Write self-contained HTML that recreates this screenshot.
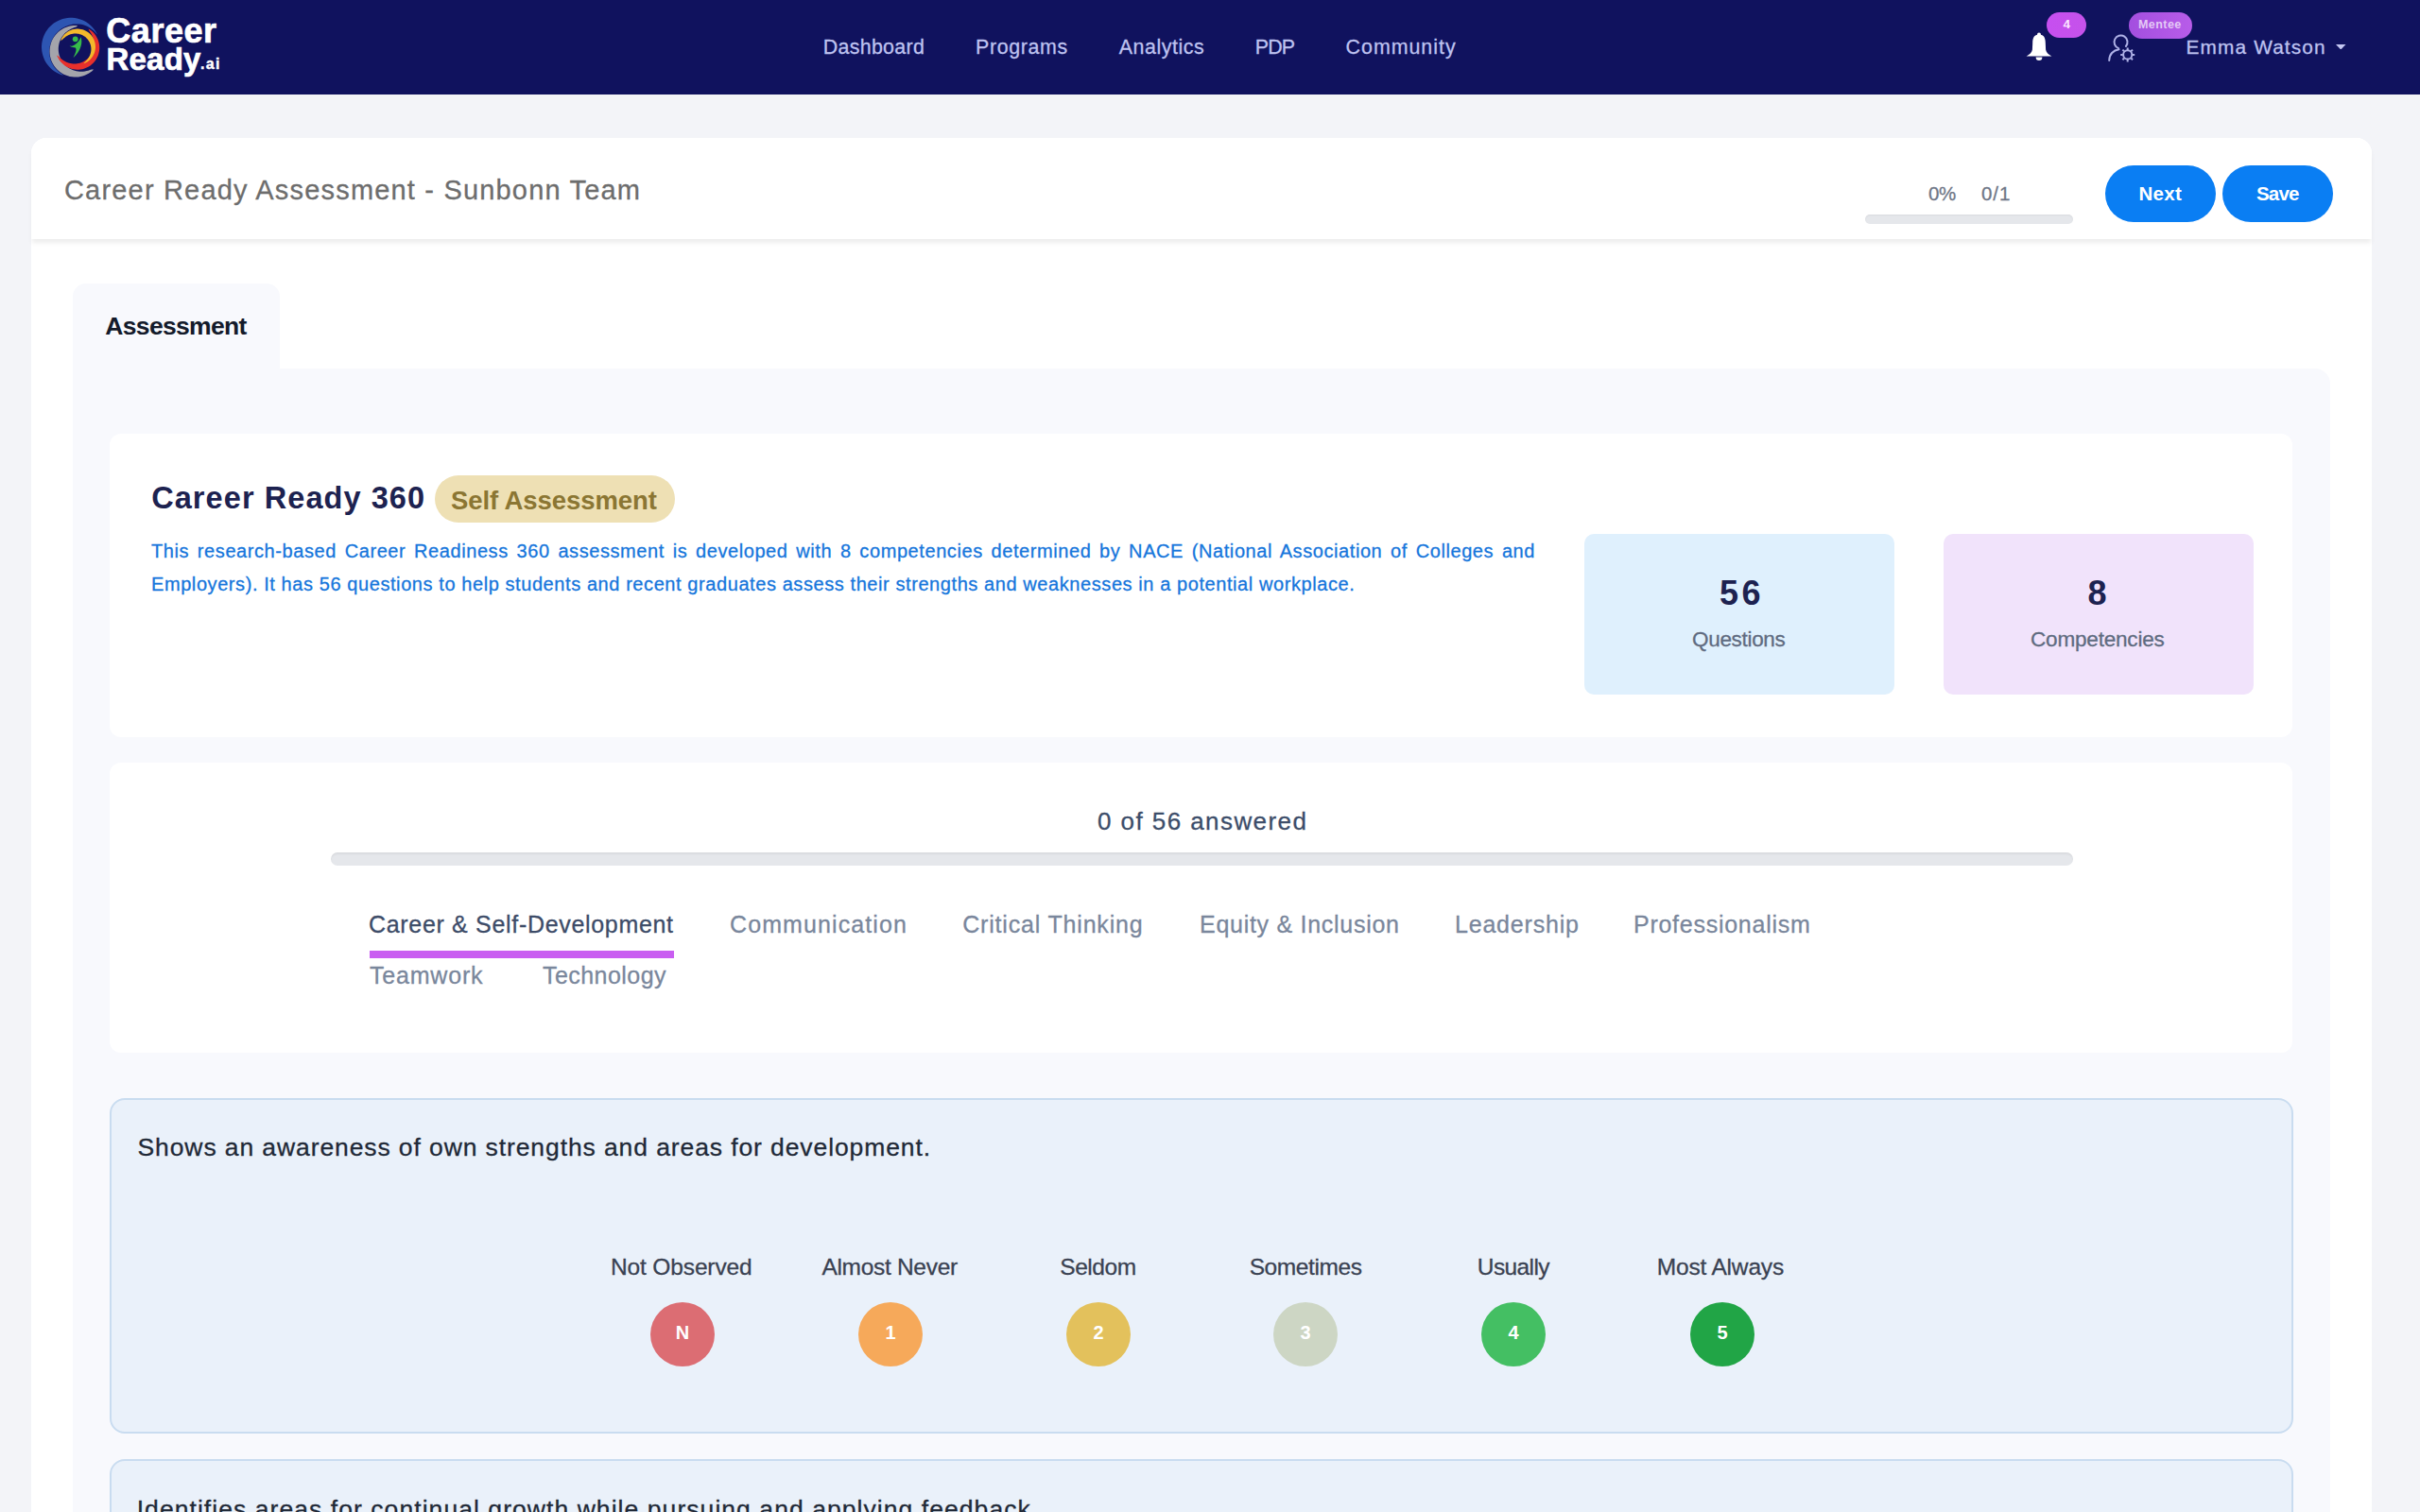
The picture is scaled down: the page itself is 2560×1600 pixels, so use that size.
<!DOCTYPE html>
<html lang="en">
<head>
<meta charset="utf-8">
<title>Career Ready Assessment - Sunbonn Team</title>
<style>
  html, body { margin:0; padding:0; }
  body { width:2560px; height:1600px; overflow:hidden; position:relative; background:#f3f4f8; font-family:"Liberation Sans", sans-serif; }
  .a { position:absolute; box-sizing:border-box; }
  .t { position:absolute; white-space:nowrap; font-family:"Liberation Sans", sans-serif; }
  #hdr { left:0; top:0; width:2560px; height:100px; background:#10125e; }
  #card { left:33px; top:146px; width:2476px; height:1500px; background:#ffffff; border-radius:16px 16px 0 0; }
  #titlebar { left:33px; top:146px; width:2476px; height:107px; background:#ffffff; border-radius:16px 16px 0 0; box-shadow:0 5px 5px -1px rgba(0,0,0,0.075); }
  .pbar { background:#e5e7eb; border-radius:6px; }
  .btn { background:#0a7ef3; border-radius:30px; }
  #tab { left:77px; top:300px; width:219px; height:120px; background:#f8f9fd; border-radius:14px 14px 0 0; }
  #panel { left:77px; top:390px; width:2388px; height:1300px; background:#f8f9fd; border-radius:0 16px 0 0; }
  .wcard { background:#ffffff; border-radius:12px; }
  .stat { border-radius:10px; }
  .qcard { background:#eaf1fa; border:2px solid #c9dcf0; border-radius:16px; }
  .circ { width:68px; height:68px; border-radius:50%; color:#fff; font-weight:700; font-size:20px; line-height:64px; text-align:center; }
  .desc { position:absolute; left:160px; width:1464px; font-size:20px; color:#1676dc; white-space:nowrap; -webkit-text-stroke:0.3px #1676dc; }
</style>
</head>
<body>
<div class="a" id="hdr"></div>

<!-- logo -->
<svg class="a" style="left:38px;top:12px" width="74" height="76" viewBox="0 0 74 76">
<path d="M28.98 67.74 L26.50 66.97 L24.10 65.99 L21.79 64.81 L19.59 63.45 L17.51 61.91 L15.56 60.19 L13.77 58.32 L12.13 56.31 L10.67 54.17 L9.40 51.91 L8.32 49.56 L7.43 47.12 L6.76 44.62 L6.30 42.07 L6.05 39.49 L6.01 36.90 L6.20 34.31 L6.60 31.75 L7.21 29.23 L8.03 26.77 L9.05 24.39 L10.27 22.11 L11.67 19.93 L13.25 17.87 L15.00 15.96 L16.90 14.20 L18.94 12.60 L21.11 11.18 L23.39 9.95 L25.76 8.91 L28.22 8.07 L30.73 7.44 L33.29 7.02 L35.87 6.82 L38.46 6.83 L41.05 7.07 L43.60 7.51 L46.11 8.17 L48.55 9.03 L50.91 10.10 L53.18 11.36 L55.33 12.80 L57.35 14.42 L59.24 16.20 L60.96 18.13 L62.52 20.20 L63.90 22.40 L65.10 24.70 L65.10 24.70 L63.83 23.55 L62.48 22.01 L61.02 20.52 L59.43 19.14 L57.74 17.89 L55.95 16.77 L54.07 15.80 L52.11 14.99 L50.10 14.34 L48.03 13.86 L45.93 13.54 L43.81 13.39 L41.68 13.41 L39.55 13.60 L37.44 13.95 L35.36 14.46 L33.32 15.13 L31.33 15.95 L29.40 16.93 L27.55 18.04 L25.78 19.29 L24.11 20.67 L22.54 22.17 L21.08 23.79 L19.75 25.50 L18.54 27.31 L17.47 29.20 L16.54 31.17 L15.75 33.19 L15.12 35.27 L14.64 37.39 L14.33 39.53 L14.17 41.68 L14.18 43.84 L14.35 45.99 L14.68 48.11 L15.18 50.20 L15.83 52.24 L16.64 54.21 L17.61 56.12 L18.71 57.93 L19.96 59.66 L21.34 61.27 L22.83 62.77 L24.42 64.14 L26.09 65.39 L27.77 66.52 L28.98 67.74 Z" fill="#2d55b2"/>
<path d="M44.18 15.10 L41.90 15.00 L39.62 15.09 L37.35 15.36 L35.12 15.83 L32.93 16.48 L30.81 17.31 L28.76 18.32 L26.80 19.49 L24.95 20.82 L23.21 22.31 L21.61 23.93 L20.14 25.68 L18.83 27.55 L17.68 29.52 L16.69 31.58 L15.89 33.71 L15.26 35.91 L14.82 38.15 L14.57 40.42 L14.50 42.70 L14.63 44.98 L14.95 47.24 L15.46 49.46 L16.15 51.64 L17.02 53.75 L18.06 55.78 L19.27 57.71 L20.63 59.54 L22.15 61.25 L23.80 62.83 L25.58 64.26 L27.47 65.54 L29.46 66.65 L31.54 67.60 L33.69 68.37 L35.89 68.95 L38.14 69.35 L40.41 69.56 L42.69 69.59 L44.97 69.42 L47.22 69.06 L49.44 68.51 L51.60 67.78 L53.70 66.87 L55.71 65.79 L57.62 64.55 L59.42 63.15 L61.10 61.60 L61.10 61.60 L58.99 61.49 L57.17 62.08 L55.37 62.63 L53.56 63.10 L51.75 63.44 L49.93 63.67 L48.12 63.76 L46.32 63.72 L44.54 63.55 L42.79 63.25 L41.07 62.83 L39.40 62.28 L37.78 61.61 L36.22 60.83 L34.72 59.94 L33.30 58.94 L31.96 57.85 L30.70 56.66 L29.54 55.39 L28.47 54.04 L27.50 52.62 L26.64 51.14 L25.88 49.60 L25.24 48.01 L24.71 46.38 L24.30 44.72 L24.01 43.03 L23.84 41.32 L23.79 39.61 L23.87 37.89 L24.08 36.18 L24.41 34.49 L24.86 32.83 L25.43 31.20 L26.13 29.61 L26.95 28.07 L27.88 26.59 L28.93 25.18 L30.09 23.84 L31.35 22.59 L32.71 21.43 L34.17 20.36 L35.71 19.39 L37.34 18.52 L39.03 17.75 L40.79 17.07 L42.58 16.41 L44.18 15.10 Z" fill="#a4a4ab"/>
<path d="M55.60 18.41 L57.17 19.40 L58.65 20.51 L60.04 21.74 L61.33 23.08 L62.51 24.51 L63.57 26.03 L64.50 27.64 L65.30 29.31 L65.97 31.04 L66.49 32.82 L66.88 34.64 L67.11 36.48 L67.20 38.33 L67.14 40.19 L66.93 42.03 L66.57 43.85 L66.07 45.64 L65.43 47.38 L64.66 49.06 L63.75 50.68 L62.71 52.22 L61.55 53.67 L60.29 55.02 L58.91 56.27 L57.44 57.41 L55.89 58.42 L54.26 59.31 L52.57 60.06 L50.82 60.68 L49.02 61.15 L47.20 61.48 L45.35 61.66 L43.49 61.69 L41.64 61.58 L39.81 61.32 L38.00 60.91 L36.22 60.36 L34.50 59.67 L32.84 58.84 L31.25 57.88 L29.74 56.80 L28.33 55.60 L27.01 54.30 L25.80 52.89 L24.71 51.39 L23.74 49.81 L22.90 48.15 L22.20 46.43 L22.20 46.43 L23.66 47.32 L24.79 48.46 L25.93 49.56 L27.10 50.58 L28.32 51.52 L29.59 52.37 L30.90 53.12 L32.25 53.78 L33.64 54.33 L35.04 54.78 L36.47 55.12 L37.91 55.36 L39.36 55.50 L40.80 55.53 L42.25 55.46 L43.67 55.29 L45.08 55.03 L46.47 54.67 L47.82 54.21 L49.14 53.67 L50.41 53.03 L51.64 52.31 L52.82 51.51 L53.94 50.64 L55.00 49.68 L55.99 48.66 L56.92 47.58 L57.77 46.43 L58.53 45.22 L59.22 43.96 L59.82 42.66 L60.33 41.31 L60.75 39.93 L61.08 38.52 L61.30 37.08 L61.43 35.63 L61.45 34.16 L61.37 32.69 L61.18 31.21 L60.89 29.75 L60.50 28.29 L60.00 26.86 L59.40 25.45 L58.70 24.07 L57.91 22.72 L57.05 21.39 L56.15 20.06 L55.60 18.41 Z" fill="#e8302c"/>
<path d="M26.15 31.00 L26.75 29.53 L27.48 28.12 L28.32 26.77 L29.27 25.50 L30.32 24.31 L31.47 23.22 L32.71 22.22 L34.03 21.33 L35.41 20.55 L36.86 19.89 L38.35 19.36 L39.89 18.95 L41.45 18.67 L43.03 18.52 L44.62 18.51 L46.21 18.63 L47.77 18.88 L49.32 19.26 L50.82 19.77 L52.28 20.40 L53.68 21.15 L55.01 22.02 L56.27 22.99 L57.44 24.06 L58.51 25.23 L59.48 26.49 L60.35 27.82 L61.10 29.22 L61.73 30.68 L62.24 32.18 L62.62 33.73 L62.87 35.29 L62.99 36.88 L62.98 38.47 L62.83 40.05 L62.55 41.61 L62.14 43.15 L61.61 44.64 L60.95 46.09 L60.17 47.47 L59.28 48.79 L58.28 50.03 L57.19 51.18 L56.00 52.23 L54.73 53.18 L53.38 54.02 L51.97 54.75 L50.50 55.35 L50.50 55.35 L51.42 54.02 L52.46 53.02 L53.44 52.01 L54.35 50.97 L55.17 49.90 L55.91 48.79 L56.55 47.65 L57.10 46.47 L57.55 45.27 L57.91 44.06 L58.17 42.83 L58.34 41.60 L58.42 40.36 L58.40 39.14 L58.29 37.92 L58.10 36.72 L57.81 35.55 L57.44 34.40 L56.99 33.29 L56.46 32.21 L55.85 31.18 L55.17 30.20 L54.43 29.26 L53.61 28.39 L52.74 27.57 L51.80 26.82 L50.82 26.14 L49.78 25.53 L48.70 24.99 L47.58 24.54 L46.42 24.16 L45.24 23.87 L44.03 23.66 L42.80 23.54 L41.56 23.51 L40.32 23.57 L39.07 23.72 L37.82 23.97 L36.59 24.31 L35.37 24.74 L34.17 25.27 L33.00 25.89 L31.87 26.59 L30.76 27.39 L29.69 28.26 L28.65 29.20 L27.59 30.20 L26.15 31.00 Z" fill="#f3b82b"/>
<circle cx="41.7" cy="29.3" r="2.9" fill="#36bb4a"/>
<path d="M35.6 36.6 C 39 37.4 44 35 47.6 27.2 C 49.6 33 48 41 39.5 49.3 C 42 44 43.5 40.5 41.8 38.6 C 39.8 38.4 37.5 38 35.6 36.6 Z" fill="#36bb4a"/>
</svg>

<!-- bell -->
<svg class="a" style="left:2142px;top:33px" width="30" height="33" viewBox="0 0 30 33">
  <circle cx="15" cy="3.4" r="2" fill="#ffffff"/>
  <path d="M15 3.6 C 9.6 3.6 8.2 7.6 8.2 12.5 L 7.9 19.5 C 7.6 22.5 5 24.6 1.6 26.6 L 28.4 26.6 C 25 24.6 22.4 22.5 22.1 19.5 L 21.8 12.5 C 21.8 7.6 20.4 3.6 15 3.6 Z" fill="#ffffff"/>
  <path d="M11.6 27.5 A 3.4 3.6 0 0 0 18.4 27.5 Z" fill="#ffffff"/>
</svg>
<div class="a" style="left:2165px;top:13px;width:42px;height:27px;border-radius:14px;background:linear-gradient(90deg,#c64ff0,#c552ea);"></div>

<!-- user gear -->
<svg class="a" style="left:2228px;top:34px" width="36" height="36" viewBox="0 0 36 36">
  <path d="M13.1 17.1 A 7 7 0 1 1 20.9 15" fill="none" stroke="#aeb1e6" stroke-width="2" stroke-linecap="round"/>
  <path d="M3.2 30 C 3.2 23.5 7.5 19 13.6 18.2" fill="none" stroke="#aeb1e6" stroke-width="2" stroke-linecap="round"/>
  <g transform="translate(22.7,23.9)" stroke="#aeb1e6" stroke-width="2" fill="none">
    <circle r="4.6"/>
    <path d="M0 -7.5 V -5 M0 7.5 V 5 M -7.5 0 H -5 M 7.5 0 H 5 M -5.3 -5.3 L -3.6 -3.6 M 5.3 5.3 L 3.6 3.6 M -5.3 5.3 L -3.6 3.6 M 5.3 -5.3 L 3.6 -3.6"/>
  </g>
</svg>
<div class="a" style="left:2252px;top:12.5px;width:67px;height:28px;border-radius:14px;background:linear-gradient(90deg,#a34fdf,#b85ce9);"></div>
<!-- caret -->
<svg class="a" style="left:2471px;top:46.8px" width="10.5" height="5.5" viewBox="0 0 10.5 5.5"><path d="M0 0 H10.5 L5.25 5.5 Z" fill="#c4c7f2"/></svg>

<!-- main card -->
<div class="a" id="card"></div>
<div class="a" id="titlebar"></div>
<div class="a pbar" style="left:1973px;top:227px;width:220px;height:10px;box-shadow:inset 0 1px 2px rgba(0,0,0,0.05);"></div>
<div class="a btn" style="left:2227px;top:175px;width:117px;height:60px;"></div>
<div class="a btn" style="left:2351px;top:175px;width:117px;height:60px;"></div>

<div class="a" id="tab"></div>
<div class="a" id="panel"></div>

<!-- info card -->
<div class="a wcard" style="left:116px;top:459px;width:2309px;height:321px;"></div>
<div class="a" style="left:459.5px;top:502.5px;width:254.5px;height:50px;border-radius:25px;background:#eee0b4;"></div>
<div class="a stat" style="left:1676px;top:565px;width:328px;height:170px;background:#dff0fd;"></div>
<div class="a stat" style="left:2056px;top:565px;width:328px;height:170px;background:#f1e3fb;"></div>

<!-- progress card -->
<div class="a wcard" style="left:116px;top:807px;width:2309px;height:307px;"></div>
<div class="a pbar" style="left:350px;top:902px;width:1843px;height:14px;border-radius:7px;box-shadow:inset 0 2px 2px rgba(0,0,0,0.05);"></div>
<div class="a" style="left:391px;top:1006px;width:322px;height:8px;background:#c95ef1;"></div>

<!-- question cards -->
<div class="a qcard" style="left:116px;top:1162px;width:2310px;height:355px;"></div>
<div class="a qcard" style="left:116px;top:1544px;width:2310px;height:355px;"></div>

<div class="a circ" style="left:688px;top:1378px;background:#dc6d73;">N</div>
<div class="a circ" style="left:908px;top:1378px;background:#f6a95a;">1</div>
<div class="a circ" style="left:1128px;top:1378px;background:#e3c15c;">2</div>
<div class="a circ" style="left:1347px;top:1378px;background:#cdd6c4;">3</div>
<div class="a circ" style="left:1567px;top:1378px;background:#44bf63;">4</div>
<div class="a circ" style="left:1788px;top:1378px;background:#21a546;">5</div>

<div class="t" style="left:870.7px;top:40.3px;font-size:21.4px;line-height:21.4px;font-weight:400;color:#bec2f0;letter-spacing:0.32px;-webkit-text-stroke:0.3px #bec2f0;">Dashboard</div>
<div class="t" style="left:1032.0px;top:40.3px;font-size:21.4px;line-height:21.4px;font-weight:400;color:#bec2f0;letter-spacing:0.65px;-webkit-text-stroke:0.3px #bec2f0;">Programs</div>
<div class="t" style="left:1183.7px;top:40.3px;font-size:21.4px;line-height:21.4px;font-weight:400;color:#bec2f0;letter-spacing:0.55px;-webkit-text-stroke:0.3px #bec2f0;">Analytics</div>
<div class="t" style="left:1327.7px;top:40.3px;font-size:21.4px;line-height:21.4px;font-weight:400;color:#bec2f0;letter-spacing:-0.81px;-webkit-text-stroke:0.3px #bec2f0;">PDP</div>
<div class="t" style="left:1423.6px;top:40.3px;font-size:21.4px;line-height:21.4px;font-weight:400;color:#bec2f0;letter-spacing:0.98px;-webkit-text-stroke:0.3px #bec2f0;">Community</div>
<div class="t" style="left:2312.6px;top:40.0px;font-size:20.8px;line-height:20.8px;font-weight:400;color:#bec2f0;letter-spacing:1.14px;-webkit-text-stroke:0.3px #bec2f0;">Emma Watson</div>
<div class="t" style="left:2262.0px;top:20.2px;font-size:12.5px;line-height:12.5px;font-weight:700;color:#e4c8f6;letter-spacing:0.44px;">Mentee</div>
<div class="t" style="left:2182.5px;top:19.2px;font-size:13.5px;line-height:13.5px;font-weight:700;color:#fbe6ff;letter-spacing:0.00px;">4</div>
<div class="t" style="left:112.3px;top:15.1px;font-size:36px;line-height:36px;font-weight:700;color:#ffffff;letter-spacing:0.53px;-webkit-text-stroke:0.7px #fff;">Career</div>
<div class="t" style="left:112.5px;top:45.9px;font-size:33px;line-height:33px;font-weight:700;color:#ffffff;letter-spacing:0.20px;-webkit-text-stroke:0.7px #fff;">Ready</div>
<div class="t" style="left:212.0px;top:60.3px;font-size:16px;line-height:16px;font-weight:700;color:#ffffff;letter-spacing:1.33px;-webkit-text-stroke:0.4px #fff;">.ai</div>
<div class="t" style="left:68.0px;top:186.8px;font-size:29px;line-height:29px;font-weight:400;color:#6d6d6d;letter-spacing:1.18px;-webkit-text-stroke:0.3px #6d6d6d;">Career Ready Assessment - Sunbonn Team</div>
<div class="t" style="left:2040.0px;top:194.6px;font-size:20.5px;line-height:20.5px;font-weight:400;color:#6f7787;letter-spacing:-0.40px;-webkit-text-stroke:0.3px #6f7787;">0%</div>
<div class="t" style="left:2096.0px;top:194.6px;font-size:20.5px;line-height:20.5px;font-weight:400;color:#6f7787;letter-spacing:0.95px;-webkit-text-stroke:0.3px #6f7787;">0/1</div>
<div class="t" style="left:2262.5px;top:194.6px;font-size:20.5px;line-height:20.5px;font-weight:700;color:#ffffff;letter-spacing:0.30px;">Next</div>
<div class="t" style="left:2387.0px;top:194.6px;font-size:20.5px;line-height:20.5px;font-weight:700;color:#ffffff;letter-spacing:-0.83px;">Save</div>
<div class="t" style="left:111.3px;top:331.6px;font-size:26.5px;line-height:26.5px;font-weight:700;color:#141b2b;letter-spacing:-0.67px;">Assessment</div>
<div class="t" style="left:160.2px;top:511.3px;font-size:32.5px;line-height:32.5px;font-weight:700;color:#1d2250;letter-spacing:1.07px;">Career Ready 360</div>
<div class="t" style="left:477.0px;top:515.7px;font-size:27.5px;line-height:27.5px;font-weight:700;color:#8b7633;letter-spacing:-0.09px;">Self Assessment</div>
<div class="t" style="left:1819.0px;top:610.3px;font-size:36px;line-height:36px;font-weight:700;color:#1d2250;letter-spacing:3.48px;">56</div>
<div class="t" style="left:1790.0px;top:665.5px;font-size:22.5px;line-height:22.5px;font-weight:400;color:#5f6b80;letter-spacing:-0.31px;-webkit-text-stroke:0.3px #5f6b80;">Questions</div>
<div class="t" style="left:2208.5px;top:610.3px;font-size:36px;line-height:36px;font-weight:700;color:#1d2250;letter-spacing:0.00px;">8</div>
<div class="t" style="left:2148.0px;top:665.5px;font-size:22.5px;line-height:22.5px;font-weight:400;color:#5f6b80;letter-spacing:-0.18px;-webkit-text-stroke:0.3px #5f6b80;">Competencies</div>
<div class="t" style="left:1161.0px;top:855.5px;font-size:26px;line-height:26px;font-weight:400;color:#3c4d69;letter-spacing:1.43px;-webkit-text-stroke:0.3px #3c4d69;">0 of 56 answered</div>
<div class="t" style="left:390.0px;top:965.8px;font-size:25px;line-height:25px;font-weight:400;color:#3d4c68;letter-spacing:0.68px;-webkit-text-stroke:0.3px #3d4c68;">Career &amp; Self-Development</div>
<div class="t" style="left:772.0px;top:965.8px;font-size:25px;line-height:25px;font-weight:400;color:#7a879c;letter-spacing:1.10px;-webkit-text-stroke:0.3px #7a879c;">Communication</div>
<div class="t" style="left:1018.2px;top:965.8px;font-size:25px;line-height:25px;font-weight:400;color:#7a879c;letter-spacing:0.82px;-webkit-text-stroke:0.3px #7a879c;">Critical Thinking</div>
<div class="t" style="left:1269.0px;top:965.8px;font-size:25px;line-height:25px;font-weight:400;color:#7a879c;letter-spacing:0.72px;-webkit-text-stroke:0.3px #7a879c;">Equity &amp; Inclusion</div>
<div class="t" style="left:1539.0px;top:965.8px;font-size:25px;line-height:25px;font-weight:400;color:#7a879c;letter-spacing:0.80px;-webkit-text-stroke:0.3px #7a879c;">Leadership</div>
<div class="t" style="left:1728.0px;top:965.8px;font-size:25px;line-height:25px;font-weight:400;color:#7a879c;letter-spacing:0.74px;-webkit-text-stroke:0.3px #7a879c;">Professionalism</div>
<div class="t" style="left:391.0px;top:1020.3px;font-size:25px;line-height:25px;font-weight:400;color:#7a879c;letter-spacing:0.80px;-webkit-text-stroke:0.3px #7a879c;">Teamwork</div>
<div class="t" style="left:574.0px;top:1020.3px;font-size:25px;line-height:25px;font-weight:400;color:#7a879c;letter-spacing:0.45px;-webkit-text-stroke:0.3px #7a879c;">Technology</div>
<div class="t" style="left:145.5px;top:1201.1px;font-size:26.5px;line-height:26.5px;font-weight:400;color:#1f2937;letter-spacing:0.90px;-webkit-text-stroke:0.3px #1f2937;">Shows an awareness of own strengths and areas for development.</div>
<div class="t" style="left:646.0px;top:1328.9px;font-size:24.5px;line-height:24.5px;font-weight:400;color:#3a4252;letter-spacing:-0.14px;-webkit-text-stroke:0.3px #3a4252;">Not Observed</div>
<div class="t" style="left:869.4px;top:1328.9px;font-size:24.5px;line-height:24.5px;font-weight:400;color:#3a4252;letter-spacing:-0.30px;-webkit-text-stroke:0.3px #3a4252;">Almost Never</div>
<div class="t" style="left:1121.3px;top:1328.9px;font-size:24.5px;line-height:24.5px;font-weight:400;color:#3a4252;letter-spacing:-0.45px;-webkit-text-stroke:0.3px #3a4252;">Seldom</div>
<div class="t" style="left:1321.7px;top:1328.9px;font-size:24.5px;line-height:24.5px;font-weight:400;color:#3a4252;letter-spacing:-0.41px;-webkit-text-stroke:0.3px #3a4252;">Sometimes</div>
<div class="t" style="left:1562.8px;top:1328.9px;font-size:24.5px;line-height:24.5px;font-weight:400;color:#3a4252;letter-spacing:-0.61px;-webkit-text-stroke:0.3px #3a4252;">Usually</div>
<div class="t" style="left:1752.8px;top:1328.9px;font-size:24.5px;line-height:24.5px;font-weight:400;color:#3a4252;letter-spacing:-0.18px;-webkit-text-stroke:0.3px #3a4252;">Most Always</div>
<div class="t" style="left:144.7px;top:1583.6px;font-size:26.5px;line-height:26.5px;font-weight:400;color:#1f2937;letter-spacing:1.06px;-webkit-text-stroke:0.3px #1f2937;">Identifies areas for continual growth while pursuing and applying feedback.</div>
<div class="desc" style="top:572.6px;line-height:20px;letter-spacing:0.58px;text-align:justify;text-align-last:justify;white-space:normal;">This research-based Career Readiness 360 assessment is developed with 8 competencies determined by NACE (National Association of Colleges and</div>
<div class="desc" style="top:607.6px;line-height:20px;letter-spacing:0.58px;">Employers). It has 56 questions to help students and recent graduates assess their strengths and weaknesses in a potential workplace.</div>
</body>
</html>
